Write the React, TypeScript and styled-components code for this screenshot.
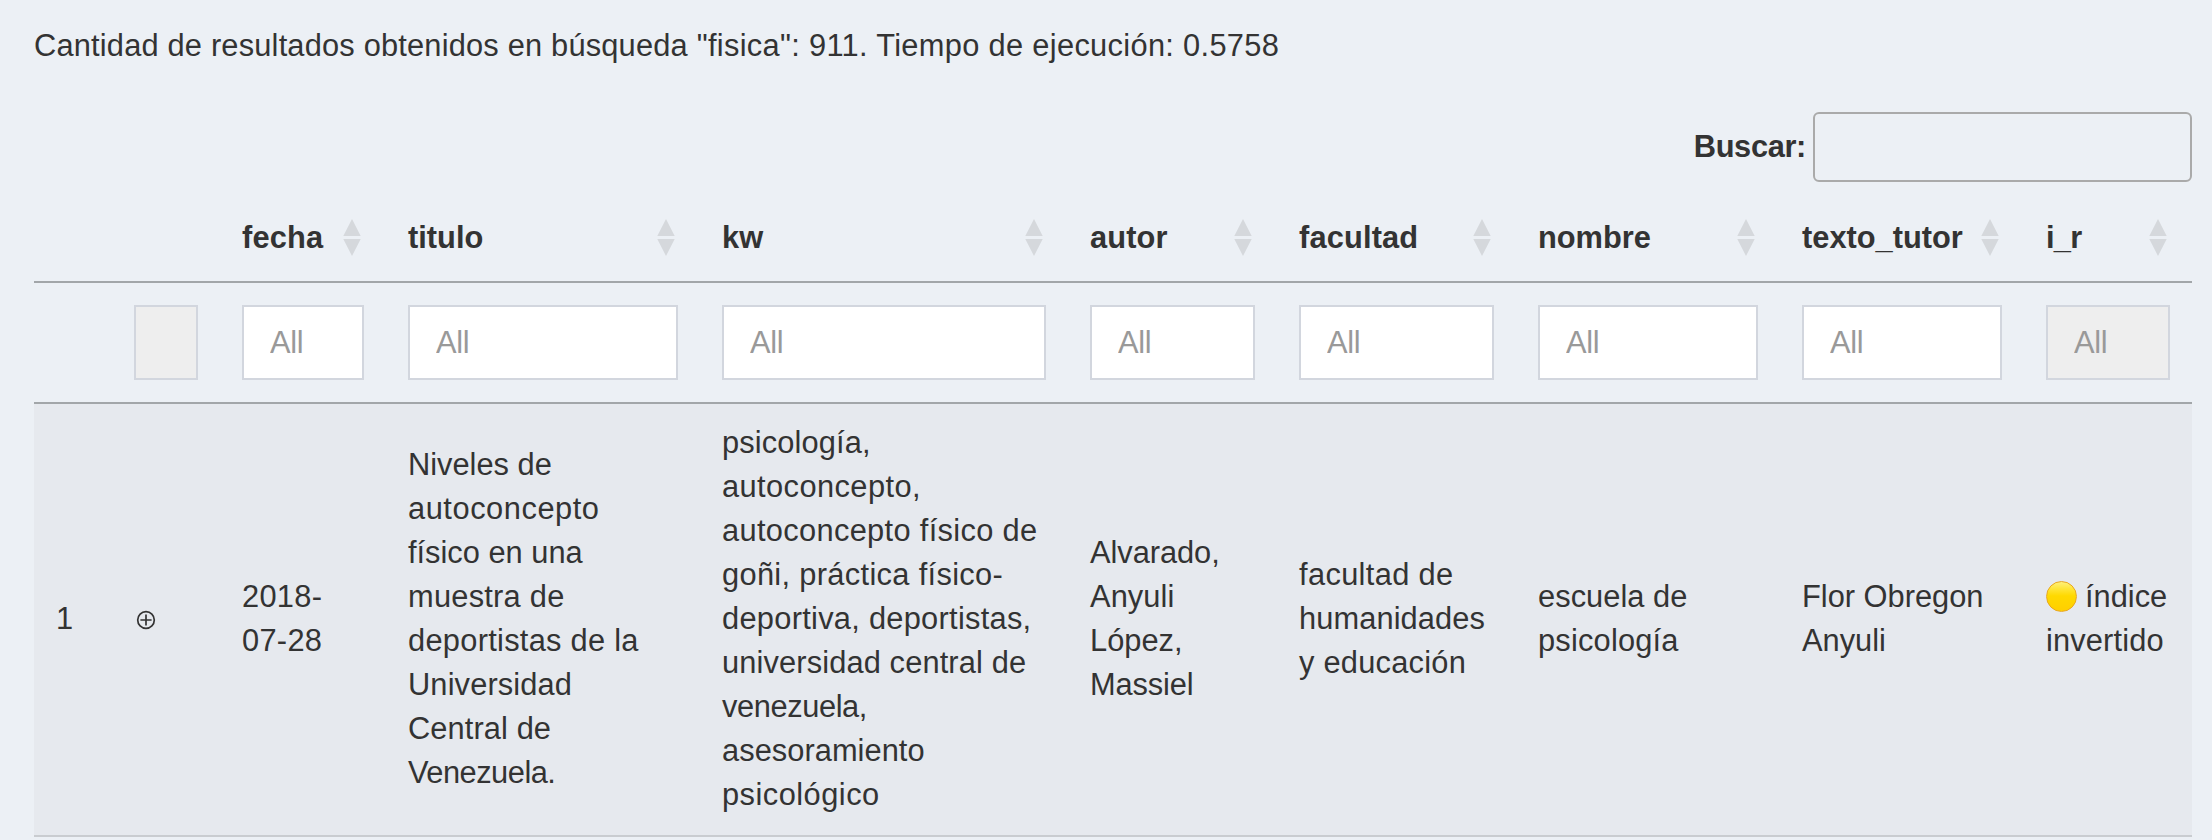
import React from "react";
import styled, { createGlobalStyle } from "styled-components";

const GlobalStyle = createGlobalStyle`
  * { box-sizing: border-box; }
  body {
    margin: 0;
    background: #ecf0f5;
    color: #333;
    font: 30.8px/44px "Liberation Sans", Arial, sans-serif;
    overflow: hidden;
  }
`;

const Page = styled.main`
  height: 840px;
  padding: 24px 20px 0 34px;
  overflow: hidden;
`;

const Summary = styled.p`
  margin: 0;
  height: 88px;
  white-space: nowrap;
`;

const SearchBar = styled.label`
  display: flex;
  justify-content: flex-end;
  align-items: center;
  gap: 7px;
  height: 70px;
  font-weight: 700;
  letter-spacing: -0.35px;
`;

const SearchInput = styled.input`
  width: 379px;
  height: 70px;
  padding: 11px;
  border: 2px solid #aaa;
  border-radius: 6px;
  background: transparent;
  font: inherit;
`;

const Table = styled.table`
  width: 2158px;
  table-layout: fixed;
  border-collapse: separate;
  border-spacing: 0;
`;

const Col = styled.col<{ $w: number }>`
  width: ${(p) => p.$w}px;
`;

const HeadCell = styled.th`
  height: 101px;
  padding: 12px 20px 0 22px;
  border-bottom: 2px solid #a2a6a9;
  text-align: left;
  vertical-align: middle;
`;

const HeadContent = styled.div`
  display: flex;
  justify-content: space-between;
  align-items: center;
  height: 51px;
  white-space: nowrap;
`;

const SortIcon = styled.svg`
  width: 18px;
  height: 37px;
  margin: 0 5px 0 0;
  flex: none;
  fill: #d5d8dc;
`;

const FilterCell = styled.td`
  height: 121px;
  padding: 0 22px;
  border-bottom: 2px solid #a2a6a9;
  vertical-align: middle;
`;

const FilterInput = styled.input`
  display: block;
  width: 100%;
  height: 75px;
  padding: 0 26px;
  border: 2px solid #d2d6de;
  border-radius: 0;
  background: #fff;
  font: inherit;
  letter-spacing: -0.3px;
  &::placeholder { color: #999; opacity: 1; }
  &:disabled { background: #eee; }
`;

const BodyCell = styled.td`
  height: 433px;
  padding: 0 0 2px 22px;
  border-bottom: 2px solid #c9ccd0;
  background: #e6e9ee;
  vertical-align: middle;
  white-space: nowrap;
`;

const Line = styled.div<{ $track?: number }>`
  letter-spacing: ${(p) => p.$track ?? 0}px;
`;

const Tracked = styled.span<{ $track: number }>`
  letter-spacing: ${(p) => p.$track}px;
`;

const ExpandIcon = styled.svg`
  display: block;
  width: 20px;
  height: 20px;
  margin: 2px 0 0 2px;
  fill: none;
  stroke: #333;
  stroke-width: 1.7;
`;

const Dot = styled.span`
  display: inline-block;
  width: 31px;
  height: 31px;
  margin-right: 8px;
  vertical-align: -5px;
  border: 1.5px solid #e9a820;
  border-radius: 50%;
  background: linear-gradient(#fff07a 0%, #ffe63c 22%, #ffd900 48%, #ffcf00 100%);
`;

type Column = { name?: string; width: number; track?: number; filter?: "on" | "off" | "blank" };

const columns: Column[] = [
  { width: 78 },
  { width: 108, filter: "blank" },
  { name: "fecha", width: 166, track: 0.15, filter: "on" },
  { name: "titulo", width: 314, filter: "on" },
  { name: "kw", width: 368, filter: "on" },
  { name: "autor", width: 209, track: 0.1, filter: "on" },
  { name: "facultad", width: 239, track: 0.15, filter: "on" },
  { name: "nombre", width: 264, filter: "on" },
  { name: "texto_tutor", width: 244, filter: "on" },
  { name: "i_r", width: 168, track: -0.7, filter: "off" },
];

// Each line carries its text and its letter spacing in pixels.
type TextLine = [string, number];

const record: TextLine[][] = [
  [["2018-", 0.3], ["07-28", 0.3]],
  [
    ["Niveles de", 0],
    ["autoconcepto", 0.55],
    ["físico en una", 0],
    ["muestra de", 0.25],
    ["deportistas de la", 0.28],
    ["Universidad", 0.13],
    ["Central de", 0.1],
    ["Venezuela.", -0.5],
  ],
  [
    ["psicología,", 0.13],
    ["autoconcepto,", 0.42],
    ["autoconcepto físico de", 0.33],
    ["goñi, práctica físico-", 0.33],
    ["deportiva, deportistas,", 0.28],
    ["universidad central de", 0.13],
    ["venezuela,", -0.4],
    ["asesoramiento", 0.05],
    ["psicológico", 0.48],
  ],
  [["Alvarado,", -0.05], ["Anyuli", 0.1], ["López,", 0], ["Massiel", -0.15]],
  [["facultad de", 0.35], ["humanidades", 0.1], ["y educación", 0.25]],
  [["escuela de", 0.05], ["psicología", 0.2]],
  [["Flor Obregon", 0], ["Anyuli", 0]],
];

export default function App() {
  return (
    <Page>
      <GlobalStyle />
      <Summary>
        <Tracked $track={0.19}>Cantidad de resultados obtenidos en búsqueda </Tracked>
        <Tracked $track={0.32}>"fisica": 911. Tiempo de ejecución: 0.5758</Tracked>
      </Summary>
      <SearchBar>
        Buscar:
        <SearchInput type="search" />
      </SearchBar>
      <Table>
        <colgroup>
          {columns.map((c, i) => (
            <Col key={i} $w={c.width} />
          ))}
        </colgroup>
        <thead>
          <tr>
            {columns.map((c, i) => (
              <HeadCell key={i}>
                {c.name && (
                  <HeadContent>
                    <Tracked $track={c.track ?? 0}>{c.name}</Tracked>
                    <SortIcon viewBox="0 0 18 37">
                      <path d="M9 0L17.7 17H0.3zM0.3 20H17.7L9 37z" />
                    </SortIcon>
                  </HeadContent>
                )}
              </HeadCell>
            ))}
          </tr>
          <tr>
            {columns.map((c, i) => (
              <FilterCell key={i}>
                {c.filter && (
                  <FilterInput disabled={c.filter !== "on"} placeholder={c.filter === "blank" ? "" : "All"} />
                )}
              </FilterCell>
            ))}
          </tr>
        </thead>
        <tbody>
          <tr>
            <BodyCell>1</BodyCell>
            <BodyCell>
              <ExpandIcon viewBox="0 0 20 20">
                <circle cx="10" cy="10" r="8.3" />
                <path d="M10 4.4V15.6M4.4 10H15.6" />
              </ExpandIcon>
            </BodyCell>
            {record.map((lines, i) => (
              <BodyCell key={i}>
                {lines.map(([text, track]) => (
                  <Line key={text} $track={track}>
                    {text}
                  </Line>
                ))}
              </BodyCell>
            ))}
            <BodyCell>
              <Line>
                <Dot />
                índice
              </Line>
              <Line $track={0.15}>invertido</Line>
            </BodyCell>
          </tr>
        </tbody>
      </Table>
    </Page>
  );
}
